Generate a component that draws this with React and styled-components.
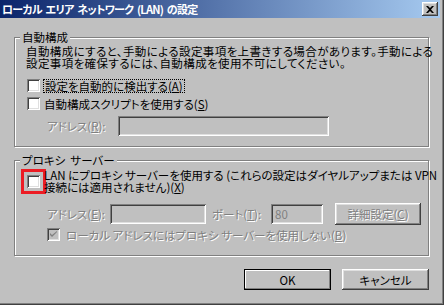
import React from "react";
import styled, { createGlobalStyle } from "styled-components";

const GlobalStyle = createGlobalStyle`
  html, body {
    margin: 0;
    padding: 0;
    background: #c0c0c0;
  }
  body {
    font-family: "Noto Sans CJK JP", "Liberation Sans", sans-serif;
  }
`;

const Window = styled.div`
  width: 444px;
  height: 305px;
  box-sizing: border-box;
  padding: 0 4px 4px 0;
  background: #c0c0c0;
  box-shadow: inset -1px -1px #404040, inset -2px -2px #808080;
  display: flex;
  flex-direction: column;
  font-size: 11.5px;
  line-height: 12px;
  color: #000;
  font-feature-settings: "palt";
`;

const TitleBar = styled.div`
  height: 18px;
  padding: 0 2px;
  display: flex;
  align-items: center;
  justify-content: space-between;
  background: linear-gradient(to right, #0a246a, #a6caf0);
  color: #fff;
  font-size: 11px;
  letter-spacing: -0.7px;
  font-weight: bold;
  white-space: pre;
`;

const CloseButton = styled.div`
  width: 16px;
  height: 14px;
  display: flex;
  align-items: center;
  justify-content: center;
  background: #c0c0c0;
  box-shadow: inset -1px -1px #404040, inset 1px 1px #fff,
    inset -2px -2px #808080, inset 2px 2px #dfdfdf;
`;

const Body = styled.div`
  flex: 1;
  padding: 13px 0 0 14px;
  display: flex;
  flex-direction: column;
`;

const Group = styled.fieldset`
  margin: ${(p) => p.$top || 0}px 0 0 0;
  width: 415px;
  box-sizing: border-box;
  padding: ${(p) => p.$pad};
  border: 1px solid #808080;
  box-shadow: inset 1px 1px #fff, 1px 1px #fff;
  display: flex;
  flex-direction: column;
  min-inline-size: 0;
`;

const Legend = styled.legend`
  margin-left: -6px;
  padding: 0 2px;
  background: #c0c0c0;
  line-height: 12px;
  white-space: pre;
`;

const Desc = styled.div`
  margin: 0;
  white-space: nowrap;
  letter-spacing: 0.4px;
`;

const Row = styled.div`
  display: flex;
  align-items: center;
  margin-top: ${(p) => p.$top || 0}px;
  padding-left: ${(p) => p.$indent || 0}px;
`;

const Box = styled.span`
  flex: none;
  width: 13px;
  height: 13px;
  box-sizing: border-box;
  margin-left: ${(p) => p.$ml || 0}px;
  margin-right: ${(p) => p.$mr || 4}px;
  display: flex;
  align-items: center;
  justify-content: center;
  background: ${(p) => (p.$disabled ? "#c0c0c0" : "#fff")};
  box-shadow: inset 1px 1px #808080, inset -1px -1px #fff,
    inset 2px 2px #404040, inset -2px -2px #dfdfdf;
  outline: ${(p) => (p.$marked ? "3px solid #ec1c24" : "none")};
  outline-offset: 3px;
`;

const Text = styled.span`
  white-space: pre;
  color: ${(p) => (p.$disabled ? "#808080" : "#000")};
  text-shadow: ${(p) => (p.$disabled ? "1px 1px 0 #fff" : "none")};
  width: ${(p) => (p.$w ? `${p.$w}px` : "auto")};
  flex: none;
  margin-left: ${(p) => p.$ml || 0}px;
`;

const Focus = styled.span`
  white-space: nowrap;
  padding: 0 1px;
  line-height: 12px;
  outline: 1px dotted #000;
  outline-offset: 0;
`;

const Key = styled.span`
  text-decoration: underline;
`;

const Field = styled.span`
  flex: none;
  width: ${(p) => p.$w}px;
  height: 20px;
  box-sizing: border-box;
  padding: 4px 4px 0;
  margin-left: ${(p) => p.$ml || 0}px;
  background: #c0c0c0;
  color: #808080;
  box-shadow: inset 1px 1px #808080, inset -1px -1px #fff,
    inset 2px 2px #404040, inset -2px -2px #dfdfdf;
`;

const Button = styled.button`
  flex: none;
  width: ${(p) => p.$w}px;
  height: ${(p) => p.$h || 21}px;
  margin-left: ${(p) => p.$ml || 0}px;
  padding: 0;
  border: none;
  font: inherit;
  font-feature-settings: "palt";
  background: #c0c0c0;
  color: ${(p) => (p.disabled ? "#808080" : "#000")};
  text-shadow: ${(p) => (p.disabled ? "1px 1px 0 #fff" : "none")};
  box-shadow: ${(p) =>
    p.$default
      ? "inset 0 0 0 1px #000, inset -2px -2px #808080, inset 2px 2px #fff"
      : "inset -1px -1px #404040, inset 1px 1px #fff, inset -2px -2px #808080, inset 2px 2px #dfdfdf"};
`;

const Footer = styled.div`
  margin-top: 13px;
  padding-right: 11px;
  display: flex;
  justify-content: flex-end;
  gap: 11px;
`;

function App() {
  return (
    <>
      <GlobalStyle />
      <Window>
        <TitleBar>
          <span>{"ローカル  エリア  ネットワーク  (LAN)  の設定"}</span>
          <CloseButton>
            <svg width="8" height="7" viewBox="0 0 8 7">
              <path d="M0 0h2l2 2 2-2h2L5 3.5 8 7H6L4 5 2 7H0l3-3.5z" fill="#000" />
            </svg>
          </CloseButton>
        </TitleBar>
        <Body>
          <Group $pad="2px 0 10px 11px">
            <Legend>自動構成</Legend>
            <Desc>
              自動構成にすると、手動による設定事項を上書きする場合があります。手動による
              <br />
              設定事項を確保するには、自動構成を使用不可にしてください。
            </Desc>
            <Row $top={10}>
              <Box $ml={1} />
              <Focus>
                設定を自動的に検出する(<Key>A</Key>)
              </Focus>
            </Row>
            <Row $top={5}>
              <Box $ml={1} />
              <Text>
                自動構成スクリプトを使用する(<Key>S</Key>)
              </Text>
            </Row>
            <Row $top={6} $indent={21}>
              <Text $disabled $w={71}>
                アドレス(<Key>R</Key>):
              </Text>
              <Field $w={211} />
            </Row>
          </Group>

          <Group $top={7} $pad="3px 0 14px 11px">
            <Legend>プロキシ  サーバー</Legend>
            <Row>
              <Box $ml={1} $marked />
              <Text>
                {"LAN にプロキシ サーバーを使用する (これらの設定はダイヤルアップまたは VPN"}
                <br />
                接続には適用されません)(<Key>X</Key>)
              </Text>
            </Row>
            <Row $top={10} $indent={21}>
              <Text $disabled $w={63}>
                アドレス(<Key>E</Key>):
              </Text>
              <Field $w={96} />
              <Text $disabled $w={59} $ml={6}>
                ポート(<Key>T</Key>):
              </Text>
              <Field $w={52}>80</Field>
              <Button disabled $w={86} $h={22} $ml={12}>
                詳細設定(<Key>C</Key>)
              </Button>
            </Row>
            <Row $top={3} $indent={21}>
              <Box $disabled $mr={6}>
                <svg width="7" height="7" viewBox="0 0 7 7">
                  <path d="M0 2v2l2 2 5-5V0L2 4z" fill="#808080" />
                </svg>
              </Box>
              <Text $disabled>
                {"ローカル アドレスにはプロキシ サーバーを使用しない("}
                <Key>B</Key>)
              </Text>
            </Row>
          </Group>

          <Footer>
            <Button $w={87} $default>
              OK
            </Button>
            <Button $w={87}>キャンセル</Button>
          </Footer>
        </Body>
      </Window>
    </>
  );
}

export default App;
